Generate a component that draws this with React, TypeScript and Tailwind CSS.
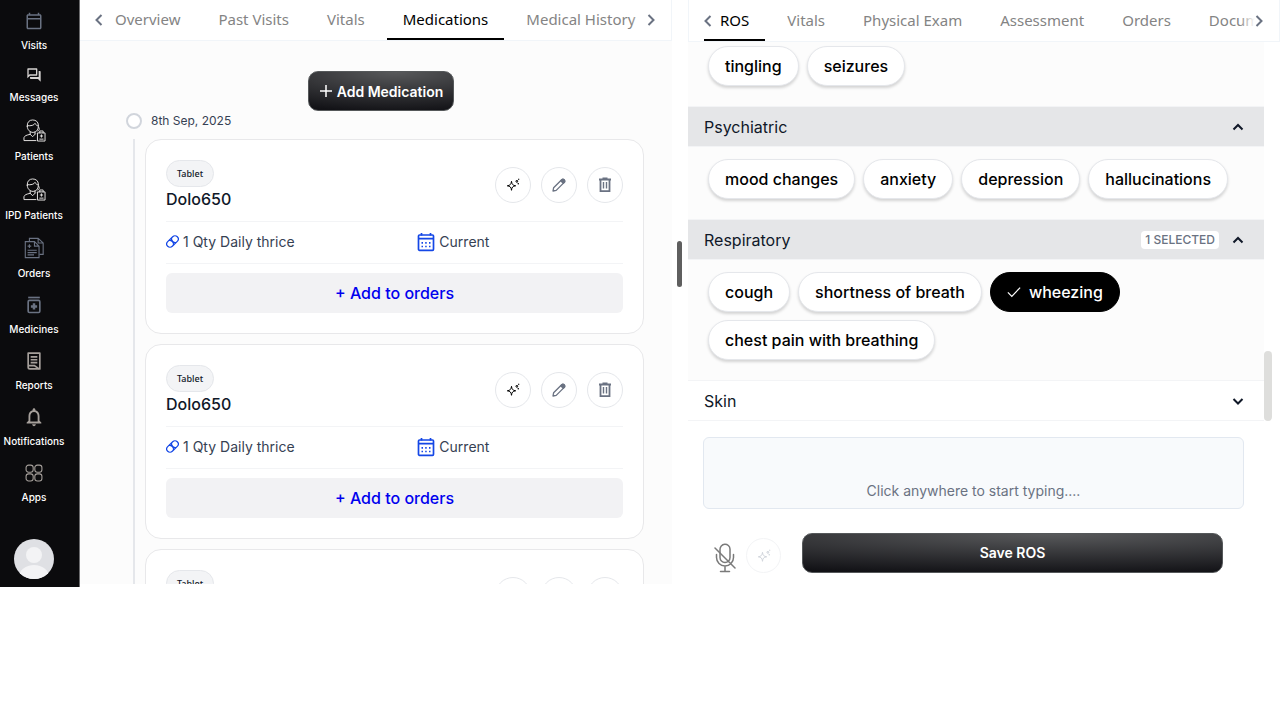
import React, { useState } from "react";
import {
  MdNotificationsNone,
  MdOutlineCalendarToday,
  MdOutlineQuestionAnswer,
} from "react-icons/md";

type SvgProps = { className?: string };

function PatientIcon({ className }: SvgProps) {
  return (
    <svg viewBox="0 0 24 24" className={className} fill="none" stroke="currentColor" strokeWidth="1" strokeLinecap="round">
      <path d="M4.500 8V6.500C4.500 3.500 6.500 1 10 1s6 2 6 5.500v1.500c0 3.500-2.500 6-5.500 6s-6-2.500-6-6z" />
      <path d="M4.500 7c4 .3 7-.3 8-2.500 .8 1.800 2 2.500 3.500 2.500M16 8c1.500 2 1.500 4-.5 4.500" />
      <path d="M7.500 13.500v2.500c-4 .8-6 1.600-6.500 3.500v3h12.500M12.500 13.500v2M7.500 16l2.500 2.500 3-3" />
      <path d="M15.500 14.500h7.500v8.500h-7.500zM17.500 14.500v-2h3.500v2M19.250 16.500v2.500M18 17.750h2.500M17.500 21h3.500" />
    </svg>
  );
}

function OrdersIcon({ className }: SvgProps) {
  return (
    <svg viewBox="0 0 24 24" className={className} fill="none" stroke="currentColor" strokeWidth="1.200">
      <path d="M7 5V1.500h9.500l5.500 5V19H18M16.500 1.500v5h5.500" />
      <path d="M2.500 5h10l5 5v12.500h-15zM12.500 5v5h5" />
      <path d="M5 10h4M7 8v4M5 14.500h10M5 17h10M5 19.500h7" />
    </svg>
  );
}

function MedicineIcon({ className }: SvgProps) {
  return (
    <svg viewBox="0 0 24 24" className={className} fill="none" stroke="currentColor" strokeWidth="2">
      <path d="M5 3h14" />
      <rect x="5" y="6.500" width="14" height="14.500" rx="1.500" />
      <path d="M12 10v7.500M8.250 13.750h7.500" strokeWidth="3" />
    </svg>
  );
}

function ReportIcon({ className }: SvgProps) {
  return (
    <svg viewBox="0 0 24 24" className={className} fill="none" stroke="currentColor" strokeWidth="2">
      <path d="M5 2.500h14v19H7a2 2 0 0 1-2-2z" strokeLinejoin="round" />
      <path d="M8 7h8M8 10.500h8M8 14h8M5 17.500h7.500l5.500 4" />
    </svg>
  );
}

function AppsIcon({ className }: SvgProps) {
  return (
    <svg viewBox="0 0 24 24" className={className} fill="none" stroke="currentColor" strokeWidth="1.300">
      <rect x="2.500" y="2.500" width="8.500" height="8.500" rx="3" />
      <rect x="13" y="2.500" width="8.500" height="8.500" rx="3" />
      <rect x="2.500" y="13" width="8.500" height="8.500" rx="3" />
      <rect x="13" y="13" width="8.500" height="8.500" rx="3" />
    </svg>
  );
}

function SparkleIcon({ className }: SvgProps) {
  return (
    <svg viewBox="0 0 16 16" className={className} fill="none" stroke="currentColor" strokeWidth="1" strokeLinejoin="round">
      <path d="M6.500 4.300c.4 3.100 1.200 4 4.200 4.500-3 .4-3.800 1.300-4.200 4.500-.4-3.200-1.300-4.100-4.200-4.500 2.900-.5 3.800-1.400 4.200-4.500z" />
      <path d="M10.700 4.300c.7-.2 1-.5 1.200-1.200.2.700.5 1 1.200 1.200-.7.2-1 .5-1.200 1.200-.2-.7-.5-1-1.200-1.200z" />
      <path d="M12.600 6.700h1.400M13.300 6v1.400M13.200 2.300h1M13.700 1.800v1" strokeWidth="0.800" />
    </svg>
  );
}

function PencilIcon({ className }: SvgProps) {
  return (
    <svg viewBox="0 0 16 16" className={className} fill="none" stroke="currentColor" strokeWidth="1.300" strokeLinejoin="round">
      <path d="M2 14l.6-3.200 8.300-8.300a1.400 1.400 0 0 1 2 0l.6.600a1.400 1.400 0 0 1 0 2l-8.300 8.300z" />
      <path d="M9.700 3.700l2.600 2.600 1.300-1.300-.2-2-1.600-.8z" fill="currentColor" />
    </svg>
  );
}

function TrashIcon({ className }: SvgProps) {
  return (
    <svg viewBox="0 0 16 16" className={className} fill="none" stroke="currentColor" strokeWidth="1.800">
      <path d="M2 2.500h12M5.500 1.500h5M3.500 2.500v11.600h9V2.500" />
      <path d="M6.500 5v6.500M9.500 5v6.500" strokeWidth="1.400" />
    </svg>
  );
}

function PillIcon({ className }: SvgProps) {
  return (
    <svg viewBox="0 0 14 14" className={className} fill="none" stroke="currentColor" strokeWidth="1.300">
      <g transform="rotate(-45 7 7)">
        <rect x="-0.300" y="3.500" width="14.600" height="7" rx="3.500" />
        <path d="M5 3.500c2.300 1.600 2.300 5.400 0 7M9 3.500c-2.300 1.600-2.300 5.400 0 7" />
      </g>
    </svg>
  );
}

function CalendarIcon({ className }: SvgProps) {
  return (
    <svg viewBox="0 0 18 20" className={className} fill="none" stroke="currentColor" strokeWidth="1.700">
      <rect x="1.500" y="3" width="15" height="15.300" rx="1" />
      <path d="M4.500 1v2.500M13.500 1v2.500M1.500 6.700h15" />
      <path d="M4.500 10.800h1.500M8.200 10.800h1.500M12 10.800h1.500M4.500 14.500h1.500M8.200 14.500h1.500M12 14.500h1.500" />
    </svg>
  );
}

function MicOffIcon({ className }: SvgProps) {
  return (
    <svg viewBox="0 0 22 30" className={className} fill="none" stroke="currentColor" strokeWidth="1.500" strokeLinecap="round">
      <path d="M6 6.500a5 5 0 0 1 10-.5v8.500a5 5 0 0 1-10 0z" />
      <path d="M2.500 11.500v3a8.500 8.500 0 0 0 17 0v-3M11 23v5.500M6.500 28.500h9M1 5l20 20" />
    </svg>
  );
}

function Chevron({ points, className }: SvgProps & { points: string }) {
  return (
    <svg viewBox="0 0 12 12" className={className} fill="none" stroke="currentColor" strokeWidth="2">
      <polyline points={points} />
    </svg>
  );
}

const LEFT = "8.500,1 3.500,6 8.500,11";
const RIGHT = "3.500,1 8.500,6 3.500,11";
const UP = "1.500,8.500 6,4 10.500,8.500";
const DOWN = "1.500,4 6,8.500 10.500,4";

const navItems: { label: string; icon: React.ReactNode }[] = [
  { label: "Visits", icon: <MdOutlineCalendarToday className="size-5 p-px text-gray-500" /> },
  { label: "Messages", icon: <MdOutlineQuestionAnswer className="size-4 text-stone-300" /> },
  { label: "Patients", icon: <PatientIcon className="size-[23px] text-stone-200" /> },
  { label: "IPD Patients", icon: <PatientIcon className="size-[23px] text-stone-200" /> },
  { label: "Orders", icon: <OrdersIcon className="size-[22px] text-gray-500" /> },
  { label: "Medicines", icon: <MedicineIcon className="size-5 text-gray-500" /> },
  { label: "Reports", icon: <ReportIcon className="size-5 text-stone-400" /> },
  { label: "Notifications", icon: <MdNotificationsNone className="size-5 scale-110 text-stone-400" /> },
  { label: "Apps", icon: <AppsIcon className="size-5 text-stone-400" /> },
];

function Sidebar() {
  return (
    <nav className="flex w-20 shrink-0 flex-col border-r border-[#6b6b6d] bg-[#0b0b0d] pt-[11px] pr-[11px]">
      {navItems.map((item) => (
        <a key={item.label} href="#" className="mb-[14px] flex flex-col items-center gap-1.5 text-white">
          {item.icon}
          <span className="text-[10px] leading-4 font-medium whitespace-nowrap">{item.label}</span>
        </a>
      ))}
      <button aria-label="Profile" className="mt-5 size-10 self-center overflow-hidden rounded-full">
        <svg viewBox="0 0 40 40" className="size-10">
          <rect width="40" height="40" fill="#dfe0e4" />
          <circle cx="20" cy="16" r="8" fill="#f3f3f5" />
          <ellipse cx="20" cy="38" rx="15" ry="12" fill="#f3f3f5" />
        </svg>
      </button>
    </nav>
  );
}

function TabBar({ tabs, initial, className }: { tabs: string[]; initial: string; className: string }) {
  const [active, setActive] = useState(initial);
  return (
    <div className={`relative shrink-0 border-b border-slate-100 bg-white ${className}`}>
      <div className="flex h-full gap-1.5 overflow-hidden">
        {tabs.map((tab) => (
          <button
            key={tab}
            onClick={() => setActive(tab)}
            className={`shrink-0 border-b-2 px-4 font-['Noto_Sans',sans-serif] text-[15px] leading-5 ${
              tab === active ? "border-black text-black" : "border-transparent text-[#848484]"
            }`}
          >
            {tab}
          </button>
        ))}
      </div>
      <button aria-label="Scroll tabs left" className="absolute top-0 left-3 flex h-full w-5 items-center pl-px text-gray-500">
        <Chevron points={LEFT} className="size-3" />
      </button>
      <button
        aria-label="Scroll tabs right"
        className="absolute top-0 right-0 flex h-full w-10 items-center bg-linear-to-l from-white from-60% to-transparent pl-[14px] text-gray-500"
      >
        <Chevron points={RIGHT} className="size-3" />
      </button>
    </div>
  );
}

const darkButton =
  "rounded-[10px] border border-[#55585a] bg-[radial-gradient(ellipse_130%_105%_at_60%_0%,#58595b,#121216)] font-semibold text-white";

const roundButton = "flex size-9 items-center justify-center rounded-full border border-gray-200 bg-white";

function MedicationCard() {
  return (
    <li className="rounded-[16px] border border-[#e8e8ea] bg-white p-5">
      <div className="flex items-start justify-between border-b border-gray-100 pb-2.5">
        <div>
          <span className="flex h-[27px] w-fit items-center rounded-full border border-gray-200 bg-gray-100 px-2.5 font-['Noto_Sans',sans-serif] text-[9px] font-medium text-gray-900">
            Tablet
          </span>
          <h3 className="text-[16px] leading-6 font-medium text-gray-900">Dolo650</h3>
        </div>
        <div className="flex gap-2.5 pt-[7px]">
          <button aria-label="Suggest" className={`${roundButton} text-black`}>
            <SparkleIcon className="size-4" />
          </button>
          <button aria-label="Edit" className={`${roundButton} text-gray-500`}>
            <PencilIcon className="size-4" />
          </button>
          <button aria-label="Delete" className={`${roundButton} text-gray-500`}>
            <TrashIcon className="size-4" />
          </button>
        </div>
      </div>
      <div className="flex h-[42px] items-center border-b border-gray-100 pb-0.5 text-[14px] text-gray-700">
        <div className="flex w-[55%] items-center">
          <PillIcon className="mr-1 size-[13px] text-blue-700" />
          <span className="mr-1">1 Qty</span>
          <span>Daily thrice</span>
        </div>
        <div className="flex items-center gap-1">
          <CalendarIcon className="h-5 w-[18px] text-blue-700" />
          <span>Current</span>
        </div>
      </div>
      <button className="mt-[9px] h-10 w-full rounded-md bg-[#f2f2f4] text-[16px] font-medium text-[#0000ee]">
        + Add to orders
      </button>
    </li>
  );
}

function MedicationsPanel() {
  return (
    <section className="flex min-w-0 flex-1 flex-col bg-[#fcfcfc]">
      <TabBar
        tabs={["Overview", "Past Visits", "Vitals", "Medications", "Medical History"]}
        initial="Medications"
        className="h-[41px] border-r pl-[19px]"
      />
      <div className="min-h-0 flex-1 overflow-y-auto pr-7 pl-[46px] [scrollbar-width:none]">
        <div className="flex justify-center pt-[30px] pr-2">
          <button className={`${darkButton} flex h-10 items-center gap-1 px-2.5 text-[14px]`}>
            <svg viewBox="0 0 14 14" className="size-[14px]" fill="none" stroke="currentColor" strokeWidth="1.500">
              <path d="M7 1v12M1 7h12" />
            </svg>
            Add Medication
          </button>
        </div>
        <div className="flex items-center gap-[9px] pt-0.5">
          <span className="size-4 rounded-full border-2 border-gray-300 bg-white" />
          <time className="text-[12px] leading-4 text-gray-700">8th Sep, 2025</time>
        </div>
        <ul className="mt-2.5 ml-[7px] flex flex-col gap-2.5 border-l-2 border-gray-200 pl-2.5">
          <MedicationCard />
          <MedicationCard />
          <MedicationCard />
        </ul>
      </div>
    </section>
  );
}

function Chip({ label, initial = false }: { label: string; initial?: boolean }) {
  const [on, setOn] = useState(initial);
  return (
    <button
      aria-pressed={on}
      onClick={() => setOn(!on)}
      className={`flex h-10 items-center gap-2 rounded-full border px-4 text-[16px] font-medium ${
        on ? "border-black bg-black text-white" : "border-gray-200 bg-white text-black shadow-[0_2px_3px_rgba(0,0,0,0.16)]"
      }`}
    >
      {on && (
        <svg viewBox="0 0 16 16" className="size-[14px]" fill="none" stroke="currentColor" strokeWidth="1.400">
          <path d="M1 8.500l4.500 4.500L15 3" />
        </svg>
      )}
      {label}
    </button>
  );
}

function SectionHeader({ title, selected, open }: { title: string; selected?: string; open: boolean }) {
  return (
    <button
      aria-expanded={open}
      className={`flex h-[41px] w-full items-center border-y border-gray-100 pr-5 pl-4 ${open ? "bg-[#e5e6e8]" : "bg-white"}`}
    >
      <span className="flex-1 text-left text-[16px] text-gray-900">{title}</span>
      {selected && (
        <span className="mr-[13px] rounded-sm bg-white px-1 text-[12px] leading-[18px] font-medium text-gray-500">
          {selected}
        </span>
      )}
      <Chevron points={open ? UP : DOWN} className="size-3 text-gray-900" />
    </button>
  );
}

function RosPanel() {
  return (
    <section className="flex min-w-0 flex-1 flex-col bg-white">
      <TabBar
        tabs={["ROS", "Vitals", "Physical Exam", "Assessment", "Orders", "Documents"]}
        initial="ROS"
        className="h-[42px] border-x pl-[15px]"
      />
      <div className="flex justify-between pr-2">
        <div className="min-w-0 flex-1 bg-[#fcfcfc]">
          <div className="flex flex-wrap gap-2 px-5 pt-1 pb-5">
            <Chip label="tingling" />
            <Chip label="seizures" />
          </div>
          <SectionHeader title="Psychiatric" open />
          <div className="flex flex-wrap gap-2 px-5 pt-3 pb-5">
            <Chip label="mood changes" />
            <Chip label="anxiety" />
            <Chip label="depression" />
            <Chip label="hallucinations" />
          </div>
          <SectionHeader title="Respiratory" selected="1 SELECTED" open />
          <div className="flex flex-wrap gap-2 px-5 pt-3 pb-5">
            <Chip label="cough" />
            <Chip label="shortness of breath" />
            <Chip label="wheezing" initial />
            <Chip label="chest pain with breathing" />
          </div>
          <SectionHeader title="Skin" open={false} />
        </div>
        <div className="flex w-2 flex-col justify-end">
          <div className="h-[70px] rounded-full bg-[#dededc]" />
        </div>
      </div>
      <div className="pt-4 pr-9 pl-[15px]">
        <textarea
          aria-label="Notes"
          placeholder="Click anywhere to start typing...."
          className="block h-[72px] w-full resize-none rounded-md border border-slate-200 bg-slate-50 pt-[43px] text-center text-[14px] leading-5 text-gray-700 placeholder:text-gray-500"
        />
      </div>
      <div className="flex items-end pt-6 pr-[57px] pl-[26px]">
        <button aria-label="Microphone off" className="mr-2.5 text-[#7a7a7a]">
          <MicOffIcon className="h-[30px] w-[22px]" />
        </button>
        <button aria-label="Suggest" className="mr-[21px] flex size-[35px] items-center justify-center rounded-full border border-gray-100 text-gray-300">
          <SparkleIcon className="size-4" />
        </button>
        <button className={`${darkButton} h-10 flex-1 pb-0.5 text-[14px]`}>Save ROS</button>
      </div>
    </section>
  );
}

export default function App() {
  return (
    <div className="min-h-screen bg-white">
      <div className="flex h-[calc(100vh-133px)] min-h-[587px] font-[Inter,'Liberation_Sans',sans-serif]">
        <Sidebar />
        <main className="flex min-w-0 flex-1 pb-[3px]">
          <MedicationsPanel />
          <div className="w-4 shrink-0 pt-[241px] pl-[5px]">
            <div role="separator" aria-orientation="vertical" className="h-[46px] w-[5px] rounded-full bg-[#5f5f5f]" />
          </div>
          <RosPanel />
        </main>
      </div>
    </div>
  );
}
